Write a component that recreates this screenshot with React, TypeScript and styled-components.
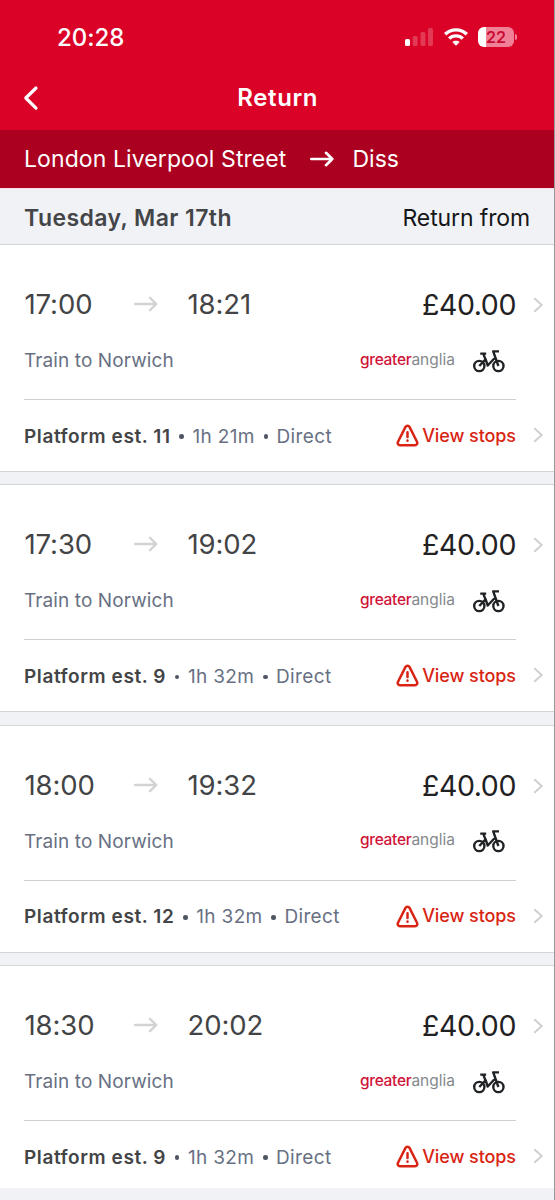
import React from "react";
import styled, { createGlobalStyle } from "styled-components";

const GlobalStyle = createGlobalStyle`
  *, *::before, *::after { box-sizing: border-box; }
  html, body { margin: 0; height: 100%; overflow: hidden; background: #f1f2f5; }
  body { font-family: Inter, "Liberation Sans", sans-serif; -webkit-font-smoothing: antialiased; }
  svg { display: block; flex: none; }
`;

const Screen = styled.div`
  width: 555px;
  height: 1200px;
  overflow: hidden;
  background: #f1f2f5;
  border-right: 1px solid #97999c;
`;

const TopBar = styled.header`
  height: 130px;
  background: #da0226;
  color: #fff;
`;

const StatusBar = styled.div`
  height: 65px;
  padding: 9px 37px 0 57px;
  display: flex;
  align-items: center;
  justify-content: space-between;
`;

const Clock = styled.span`
  padding-top: 2px;
  font-size: 24px;
  font-weight: 500;
  line-height: 30px;
  letter-spacing: -0.05px;
`;

const StatusIcons = styled.div`
  display: flex;
  align-items: center;
  gap: 10px;
`;

const Battery = styled.div`
  display: flex;
  align-items: center;
  gap: 1px;
`;

const BatteryBody = styled.div`
  width: 36px;
  height: 20px;
  border-radius: 6px;
  background: linear-gradient(90deg, #fff 8px, #f08096 8px);
  color: #c90a35;
  font-size: 16px;
  font-weight: 600;
  line-height: 20px;
  text-align: center;
`;

const BatteryTip = styled.div`
  width: 2px;
  height: 6px;
  border-radius: 0 2px 2px 0;
  background: #f08096;
`;

const TitleBar = styled.div`
  height: 65px;
  padding: 0 23px;
  display: grid;
  grid-template-columns: 60px 1fr 60px;
  align-items: center;
`;

const Title = styled.h1`
  margin: 0;
  padding-left: 1.5px;
  font-size: 24px;
  font-weight: 600;
  line-height: 30px;
  letter-spacing: 0.6px;
  text-align: center;
`;

const RouteBar = styled.div`
  height: 58px;
  padding: 0 24px;
  display: flex;
  align-items: center;
  background: #ab001f;
  color: #fff;
`;

const Station = styled.span<{ $spacing: number }>`
  font-size: 23px;
  line-height: 30px;
  letter-spacing: ${(p) => p.$spacing}px;
`;

const RouteArrow = styled.span`
  margin: 0 18px 0 24px;
`;

const DateBar = styled.div`
  height: 57px;
  padding: 3px 24px 0;
  display: flex;
  align-items: center;
  justify-content: space-between;
  background: #f1f2f5;
  border-top: 1px solid #f8dde2;
  border-bottom: 1px solid #d3d5d8;
  font-size: 23px;
  line-height: 30px;
`;

const DateText = styled.span`
  font-weight: 600;
  letter-spacing: 0.42px;
  color: #444548;
`;

const DirectionText = styled.span`
  letter-spacing: -0.12px;
  color: #151618;
`;

const cardHeight = (first: boolean, last: boolean) => (first ? 227 : last ? 223 : 228);

const Card = styled.article<{ $first: boolean; $last: boolean }>`
  height: ${(p) => cardHeight(p.$first, p.$last)}px;
  margin-bottom: 12.4px;
  padding: 0 10px 0 24px;
  display: grid;
  grid-template-columns: 492px 1fr;
  grid-template-rows: 155px 71px;
  background: #fff;
  border-top: ${(p) => (p.$first ? 0 : 1)}px solid #d3d5d7;
  border-bottom: ${(p) => (p.$last ? 0 : 1)}px solid #d3d5d7;
`;

const Journey = styled.div`
  border-bottom: 1px solid #cfd0d2;
  padding-top: 41px;
`;

const TimesRow = styled.div`
  height: 36px;
  display: grid;
  grid-template-columns: 110px 53px 1fr auto;
  align-items: center;
`;

const Time = styled.span`
  padding: 0 0 2px 0.5px;
  font-size: 27.5px;
  line-height: 36px;
  letter-spacing: -0.1px;
  color: #434446;
`;

const TimesArrow = styled.span`
  padding-bottom: 2px;
`;

const Price = styled.span`
  font-size: 28.5px;
  line-height: 36px;
  letter-spacing: -0.4px;
  color: #1f2123;
`;

const ServiceRow = styled.div`
  margin-top: 24px;
  height: 30px;
  padding-right: 11px;
  display: flex;
  align-items: center;
`;

const Destination = styled.span`
  flex: 1;
  font-size: 19px;
  line-height: 28px;
  letter-spacing: 0.1px;
  color: #687083;
`;

const Operator = styled.span`
  margin: -3px 18px 0 0;
  font-size: 15.5px;
  line-height: 20px;
  color: #85888d;
`;

const OperatorLead = styled.span`
  color: #cf1238;
  font-weight: 500;
  letter-spacing: -0.3px;
`;

const Details = styled.div`
  display: flex;
  align-items: center;
  font-size: 19px;
  line-height: 28px;
  letter-spacing: 0.35px;
  color: #687083;
`;

const Detail = styled.span`
  padding-top: 2px;
`;

const Platform = styled.strong`
  padding-top: 2px;
  font-weight: 600;
  letter-spacing: 0.58px;
  color: #434446;
`;

const Dot = styled.i`
  width: 4.5px;
  height: 4.5px;
  margin: 2px 8.5px 0 8.8px;
  border-radius: 50%;
  background: #505664;
`;

const StopsLink = styled.a`
  margin-left: auto;
  display: flex;
  align-items: center;
  gap: 3.5px;
  font-size: 18px;
  font-weight: 500;
  letter-spacing: -0.08px;
  color: #d92413;
`;

const ChevronCell = styled.div<{ $top: number }>`
  padding-top: ${(p) => p.$top}px;
  display: flex;
  justify-content: flex-end;
`;

const SignalIcon = () => (
  <svg width="29" height="18" viewBox="0 0 29 18" fill="#fff">
    <rect x="0" y="11" width="5" height="7" rx="1.5" />
    <rect x="7.7" y="8" width="5" height="10" rx="1.5" opacity=".22" />
    <rect x="15.5" y="4" width="5" height="14" rx="1.5" opacity=".22" />
    <rect x="23" y="0" width="5" height="18" rx="1.5" opacity=".22" />
  </svg>
);

const WifiIcon = () => (
  <svg width="24" height="18" viewBox="0 0 24 18" fill="none" stroke="#fff" strokeWidth="3.4">
    <path d="M1.2 6.3C7.2.4 16.8.4 22.8 6.3" />
    <path d="M5.2 10.6c3.8-3.7 9.8-3.7 13.6 0" />
    <path d="M12 17.8l-3.700-3.700c2-1.900 5.400-1.900 7.400 0z" fill="#fff" stroke="none" />
  </svg>
);

const BackIcon = () => (
  <svg width="16" height="26" viewBox="0 0 16 26" fill="none" stroke="#fff" strokeWidth="3.2" strokeLinecap="round" strokeLinejoin="round">
    <path d="M13 3L2.8 13l10.200 10.200" />
  </svg>
);

const ArrowIcon = ({ color, weight }: { color: string; weight: number }) => (
  <svg width="24" height="18" viewBox="0 0 24 18" fill="none" stroke={color} strokeWidth={weight} strokeLinecap="round" strokeLinejoin="round">
    <path d="M1.2 9H22.3M16 2.8L22.3 9 16 15.2" />
  </svg>
);

const ChevronIcon = () => (
  <svg width="11" height="16" viewBox="0 0 11 16" fill="none" stroke="#cfd0d2" strokeWidth="2">
    <path d="M1.3 1.2L8.7 8l-7.400 6.800" />
  </svg>
);

const BikeIcon = () => (
  <svg width="32" height="23" viewBox="0 0 32 23" fill="none" stroke="#1f2326" strokeWidth="2.4" strokeLinejoin="round">
    <circle cx="6.300" cy="16" r="5.100" />
    <circle cx="25.400" cy="16" r="5.100" />
    <path d="M7.200 3.600h6M10.300 3.600l2.300 6.200M6.300 16l6.300-6.800M12.400 8.600l2.300 6.900 7.700-8.200M25.400 16L20.200 1.400h5.800" />
  </svg>
);

const WarningIcon = () => (
  <svg width="23" height="23" viewBox="0 0 23 23" fill="none" stroke="#d92413" strokeWidth="2.500" strokeLinejoin="round" strokeLinecap="round">
    <path d="M9.500 2.900c.9-1.600 3.100-1.600 4 0l7.500 14.800c.8 1.700-.2 3.500-2 3.500H4c-1.800 0-2.800-1.800-2-3.500z" />
    <path d="M11.500 8.300v4.800M11.500 16.500v.2" />
  </svg>
);

const journeys = [
  { depart: "17:00", arrive: "18:21", platform: "11", duration: "1h 21m" },
  { depart: "17:30", arrive: "19:02", platform: "9", duration: "1h 32m" },
  { depart: "18:00", arrive: "19:32", platform: "12", duration: "1h 32m" },
  { depart: "18:30", arrive: "20:02", platform: "9", duration: "1h 32m" },
];

export default function App() {
  return (
    <Screen>
      <GlobalStyle />
      <TopBar>
        <StatusBar>
          <Clock>20:28</Clock>
          <StatusIcons>
            <SignalIcon />
            <WifiIcon />
            <Battery>
              <BatteryBody>22</BatteryBody>
              <BatteryTip />
            </Battery>
          </StatusIcons>
        </StatusBar>
        <TitleBar>
          <BackIcon />
          <Title>Return</Title>
        </TitleBar>
      </TopBar>
      <RouteBar>
        <Station $spacing={0.09}>London Liverpool Street</Station>
        <RouteArrow><ArrowIcon color="#fff" weight={2.6} /></RouteArrow>
        <Station $spacing={0}>Diss</Station>
      </RouteBar>
      <DateBar>
        <DateText>Tuesday, Mar 17th</DateText>
        <DirectionText>Return from</DirectionText>
      </DateBar>
      {journeys.map((j, i) => (
        <Card key={j.depart} $first={i === 0} $last={i === journeys.length - 1}>
          <Journey>
            <TimesRow>
              <Time>{j.depart}</Time>
              <TimesArrow><ArrowIcon color="#d2d3d4" weight={2.4} /></TimesArrow>
              <Time>{j.arrive}</Time>
              <Price>£40.00</Price>
            </TimesRow>
            <ServiceRow>
              <Destination>Train to Norwich</Destination>
              <Operator><OperatorLead>greater</OperatorLead>anglia</Operator>
              <BikeIcon />
            </ServiceRow>
          </Journey>
          <ChevronCell $top={52}><ChevronIcon /></ChevronCell>
          <Details>
            <Platform>Platform est. {j.platform}</Platform>
            <Dot />
            <Detail>{j.duration}</Detail>
            <Dot />
            <Detail>Direct</Detail>
            <StopsLink><WarningIcon />View stops</StopsLink>
          </Details>
          <ChevronCell $top={27}><ChevronIcon /></ChevronCell>
        </Card>
      ))}
    </Screen>
  );
}
